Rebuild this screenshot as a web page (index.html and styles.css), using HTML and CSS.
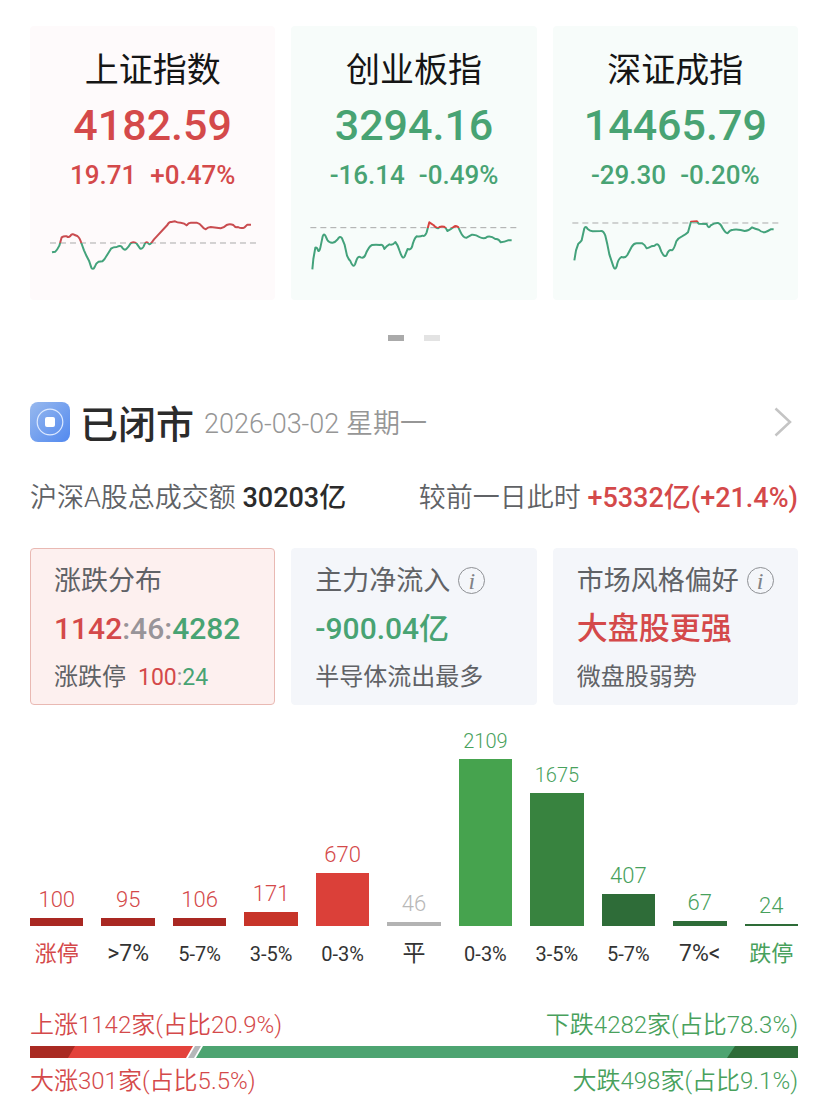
FILE: index.html
```html
<!DOCTYPE html>
<html lang="zh-CN">
<head>
<meta charset="utf-8">
<meta name="viewport" content="width=device-width, initial-scale=1">
<title>市场行情</title>
<link rel="stylesheet" href="styles.css">
</head>
<body>
<main class="page">
  <section class="grid indices" aria-label="指数">
    <article class="index index-up">
      <h2 class="index-name">上证指数</h2>
      <div class="index-value up">4182.59</div>
      <div class="index-change up"><span>19.71</span><span>+0.47%</span></div>
      <svg class="spark" viewBox="30 580 736 200" aria-hidden="true">
        <defs><linearGradient id="g1" gradientUnits="userSpaceOnUse" x1="0" y1="580" x2="0" y2="780"><stop offset=".45" stop-color="#c94c50"/><stop offset=".45" stop-color="#43a27b"/></linearGradient></defs>
        <path class="base" d="M90 670H708"/>
        <path class="line" stroke="url(#g1)" d="M96 698L106 696Q112 690 118 678L125 653Q132 648 140 650Q146 654 150 650Q157 640 164 646L172 649Q179 654 184 670L192 692L200 710L207 723L214 744Q219 752 224 742Q228 730 236 726L247 725Q254 720 260 708L273 687Q280 682 290 682Q300 676 305 681Q312 694 319 688Q326 682 332 671Q342 664 350 672L360 686Q366 690 371 680Q376 666 382 668Q388 678 394 670L402 659L442 616Q447 605 454 607L465 605Q472 609 482 609Q494 610 500 617Q506 608 514 609L530 609Q540 612 546 620Q552 628 557 629Q564 622 572 622L602 626Q612 624 620 616Q630 612 640 616Q646 625 654 622Q664 628 674 623L682 615L693 615"/>
      </svg>
    </article>
    <article class="index index-down">
      <h2 class="index-name">创业板指</h2>
      <div class="index-value down">3294.16</div>
      <div class="index-change down"><span>-16.14</span><span>-0.49%</span></div>
      <svg class="spark" viewBox="29 580 736 200" aria-hidden="true">
        <defs><linearGradient id="g2" gradientUnits="userSpaceOnUse" x1="0" y1="580" x2="0" y2="780"><stop offset=".22" stop-color="#d6423f"/><stop offset=".22" stop-color="#43a27b"/></linearGradient></defs>
        <path class="base" d="M87 624H706"/>
        <path class="line" stroke="url(#g2)" d="M93 749L96 718L102 684Q107 682 110 692Q114 698 117 684L124 650Q128 640 132 648L138 661Q144 670 154 669Q162 668 168 660Q176 646 182 656L190 676L197 708Q202 720 207 724Q215 746 221 734L226 720Q230 708 238 713Q247 717 252 706Q262 680 272 676Q284 674 296 676Q304 672 309 688Q316 678 324 674Q334 678 342 667Q350 676 355 694Q364 722 370 710L379 688Q388 692 392 682Q398 656 406 650Q416 652 424 648Q430 652 436 638L444 608Q450 612 456 616Q464 626 470 626Q476 618 488 621Q494 624 498 634Q508 630 516 623Q524 616 531 623L537 636Q546 656 556 654L572 645Q584 644 594 652Q608 660 618 651Q630 648 642 658Q652 656 658 668Q670 666 680 662L691 662"/>
      </svg>
    </article>
    <article class="index index-down">
      <h2 class="index-name">深证成指</h2>
      <div class="index-value down">14465.79</div>
      <div class="index-change down"><span>-29.30</span><span>-0.20%</span></div>
      <svg class="spark" viewBox="29 580 736 200" aria-hidden="true">
        <defs><linearGradient id="g3" gradientUnits="userSpaceOnUse" x1="0" y1="580" x2="0" y2="780"><stop offset=".14" stop-color="#d6423f"/><stop offset=".14" stop-color="#43a27b"/></linearGradient></defs>
        <path class="base" d="M87 610H706"/>
        <path class="line" stroke="url(#g3)" d="M93 722L98 692L105 672Q110 668 115 662L123 626Q127 617 133 628Q140 634 148 635L172 634Q180 632 186 648L192 674L198 704L210 740Q215 754 220 740Q224 718 234 712Q246 716 252 706L266 680Q272 671 280 671L297 671Q304 674 310 686Q316 684 324 680L334 678Q342 668 348 680L354 696Q364 716 370 706Q376 688 386 692Q392 690 399 665Q406 654 416 650Q428 644 434 638L443 606L461 605L466 612L490 613Q496 630 502 617Q514 609 524 610Q532 612 538 626Q546 640 553 641Q560 630 570 630Q580 628 592 631L604 634Q616 634 626 623Q636 628 646 630Q654 638 664 638Q674 634 682 629L691 629"/>
      </svg>
    </article>
  </section>

  <nav class="pager" aria-label="分页">
    <button class="dot dot-on" type="button" aria-label="第1页"></button>
    <button class="dot" type="button" aria-label="第2页"></button>
  </nav>

  <header class="status">
    <svg class="status-icon" viewBox="0 0 40 40" aria-hidden="true">
      <defs><linearGradient id="blue" x1="0" y1="0" x2="1" y2="1"><stop offset="0" stop-color="#98b9ee"/><stop offset="1" stop-color="#5289ef"/></linearGradient></defs>
      <rect width="40" height="40" rx="8" fill="url(#blue)"/>
      <circle cx="20" cy="20" r="12.8" fill="none" stroke="#dce9ff" stroke-width="1.2"/>
      <rect x="15" y="15" width="10" height="10" rx="2" fill="#fff"/>
    </svg>
    <h1 class="status-title">已闭市</h1>
    <time class="status-date" datetime="2026-03-02">2026-03-02 星期一</time>
    <button class="more" type="button" aria-label="更多">
      <svg class="chevron" viewBox="0 0 18 30" aria-hidden="true"><path d="M1.500 1.500L16 15L1.500 28.500"/></svg>
    </button>
  </header>

  <div class="turnover">
    <div>沪深A股总成交额 <strong class="total">30203亿</strong></div>
    <div>较前一日此时 <strong class="up">+5332亿(+21.4%)</strong></div>
  </div>

  <section class="grid tiles" aria-label="市场概况">
    <article class="tile tile-on">
      <h2 class="tile-title">涨跌分布</h2>
      <div class="tile-value"><span class="up">1142</span><span class="flat">:46:</span><span class="down">4282</span></div>
      <div class="tile-note">涨跌停<span class="limits"><span class="up">100</span><span class="flat">:</span><span class="down">24</span></span></div>
    </article>
    <article class="tile">
      <h2 class="tile-title">主力净流入
        <button class="info" type="button" aria-label="主力净流入说明">i</button></h2>
      <div class="tile-value down">-900.04亿</div>
      <div class="tile-note">半导体流出最多</div>
    </article>
    <article class="tile">
      <h2 class="tile-title">市场风格偏好
        <button class="info" type="button" aria-label="市场风格偏好说明">i</button></h2>
      <div class="tile-value tile-words up">大盘股更强</div>
      <div class="tile-note">微盘股弱势</div>
    </article>
  </section>

  <section class="chart" aria-label="涨跌分布图">
    <div class="col up"><span class="count">100</span><span class="bar red-3" style="height:8px"></span><span class="axis axis-cjk">涨停</span></div>
    <div class="col up"><span class="count">95</span><span class="bar red-3" style="height:8px"></span><span class="axis axis-end">&gt;7%</span></div>
    <div class="col up"><span class="count">106</span><span class="bar red-3" style="height:8px"></span><span class="axis axis-range">5-7%</span></div>
    <div class="col up"><span class="count">171</span><span class="bar red-2" style="height:14px"></span><span class="axis axis-range">3-5%</span></div>
    <div class="col up"><span class="count">670</span><span class="bar red-1" style="height:53px"></span><span class="axis axis-range">0-3%</span></div>
    <div class="col even"><span class="count">46</span><span class="bar gray" style="height:4px"></span><span class="axis axis-end">平</span></div>
    <div class="col fall"><span class="count count-long">2109</span><span class="bar green-1" style="height:167px"></span><span class="axis axis-range">0-3%</span></div>
    <div class="col fall"><span class="count count-long">1675</span><span class="bar green-2" style="height:133px"></span><span class="axis axis-range">3-5%</span></div>
    <div class="col fall"><span class="count">407</span><span class="bar green-3" style="height:32px"></span><span class="axis axis-range">5-7%</span></div>
    <div class="col fall"><span class="count">67</span><span class="bar green-3" style="height:5px"></span><span class="axis axis-end">7%&lt;</span></div>
    <div class="col fall"><span class="count">24</span><span class="bar green-3" style="height:2px"></span><span class="axis axis-cjk">跌停</span></div>
  </section>

  <section class="ratio" aria-label="涨跌占比">
    <div class="ratio-row"><span class="up">上涨1142家(占比20.9%)</span><span class="fall">下跌4282家(占比78.3%)</span></div>
    <svg class="ratio-bar" viewBox="0 0 768 12" preserveAspectRatio="none" aria-hidden="true">
      <path fill="#e3423b" d="M38 0H163L156 12H38z"/>
      <path fill="#a92a22" d="M0 0H45L38 12H0z"/>
      <path fill="#b5b7b9" d="M165 0H171L164 12H158z"/>
      <path fill="#4da471" d="M173 0H710V12H166z"/>
      <path fill="#2e6c38" d="M705 0H768V12H697z"/>
    </svg>
    <div class="ratio-row"><span class="up">大涨301家(占比5.5%)</span><span class="fall">大跌498家(占比9.1%)</span></div>
  </section>
</main>
</body>
</html>
```
FILE: styles.css
```css
* { box-sizing: border-box; }

body {
  margin: 0;
  background: #fff;
  color: #606266;
  font-family: Roboto, "Noto Sans CJK SC", sans-serif;
  font-weight: 400;
}

h1, h2 { margin: 0; font-weight: 400; }

button {
  padding: 0;
  border: 0;
  background: none;
  font: inherit;
  color: inherit;
  cursor: pointer;
}

.page { padding: 26px 30px 9px; }

.up { color: #d4494a; }
.down { color: #48a373; }
.fall { color: #48a15c; }
.even { color: #b8b8b8; }
.flat { color: #989499; }

.grid {
  display: grid;
  grid-template-columns: repeat(3, minmax(0, 1fr));
  gap: 16px;
}

/* Index cards */
.index {
  padding: 20px 0;
  border-radius: 4px;
  text-align: center;
}
.index-up { background: #fefafb; }
.index-down { background: #f7fcfa; }
.index-name {
  color: #151515;
  font-size: 34px;
  line-height: 48px;
}
.index-value {
  margin-top: 3px;
  font-size: 43px;
  font-weight: 500;
  line-height: 56px;
}
.index-change {
  display: flex;
  justify-content: center;
  gap: 14px;
  margin-top: 4px;
  font-size: 26px;
  font-weight: 500;
  line-height: 36px;
}
.spark {
  display: block;
  width: 100%;
  margin-top: 20px;
}
.spark path { fill: none; }
.base { stroke: #a9a9a9; stroke-width: 3; stroke-dasharray: 18 12; }
.line { stroke-width: 6; stroke-linejoin: round; }

/* Pager */
.pager {
  display: flex;
  justify-content: center;
  gap: 20px;
  margin-top: 35px;
}
.dot { width: 16px; height: 6px; background: #e3e3e3; }
.dot-on { background: #aaa; }

/* Market status */
.status {
  display: flex;
  align-items: center;
  height: 56px;
  margin-top: 53px;
}
.status-icon { width: 40px; height: 40px; }
.status-title {
  margin-left: 10px;
  color: #2b2b2b;
  font-size: 38px;
  font-weight: 500;
}
.status-date {
  margin-left: 10px;
  color: #969696;
  font-size: 27px;
  font-weight: 350;
}
.more {
  margin-left: auto;
  padding: 4px 6px;
}
.chevron { display: block; width: 18px; height: 30px; }
.chevron path { fill: none; stroke: #c4c4c4; stroke-width: 2.500; }

.turnover {
  display: flex;
  justify-content: space-between;
  margin-top: 28px;
  font-size: 27px;
  font-weight: 350;
  line-height: 40px;
  white-space: nowrap;
}
.turnover strong { font-weight: 500; }
.total { color: #2b2b2b; }

/* Summary tiles */
.tiles { margin-top: 30px; }
.tile {
  padding: 14px 0 9px 23px;
  border: 1px solid #f4f6fa;
  border-radius: 4px;
  background: #f4f6fa;
  white-space: nowrap;
}
.tile-on { border-color: #e9b9b3; background: #fdf0ef; }
.tile-title {
  display: flex;
  align-items: center;
  gap: 8px;
  font-size: 27px;
  line-height: 36px;
}
.info {
  width: 27px;
  height: 27px;
  border: 1px solid #8e9094;
  border-radius: 50%;
  color: #808287;
  font: italic 24px/24px "Liberation Serif", serif;
}
.tile-value {
  margin: 8px 0;
  font-size: 30px;
  font-weight: 500;
  line-height: 44px;
}
.tile-words { font-size: 31px; }
.tile-note { font-size: 24px; line-height: 36px; }
.limits { margin-left: 12px; font-size: 23px; line-height: 24px; }

/* Distribution chart */
.chart {
  display: grid;
  grid-template-columns: repeat(11, minmax(0, 1fr));
  gap: 18px;
  align-items: end;
  margin-top: 22px;
  text-align: center;
}
.col {
  display: flex;
  flex-direction: column;
  align-items: center;
  white-space: nowrap;
}
.count { font-size: 22px; font-weight: 350; line-height: 28px; }
.count-long { font-size: 20px; }
.bar { width: 100%; margin: 4px 0 12px; }
.red-1 { background: #db4039; }
.red-2 { background: #c73429; }
.red-3 { background: #a92822; }
.gray { background: #b3b3b3; }
.green-1 { background: #46a34e; }
.green-2 { background: #38833f; }
.green-3 { background: #2e6c38; }
.axis { color: #333; line-height: 32px; }
.axis-cjk { color: inherit; font-size: 22px; }
.axis-end { font-size: 23px; }
.axis-range { font-size: 20px; }

/* Rise and fall ratio */
.ratio { margin-top: 38px; }
.ratio-row {
  display: flex;
  justify-content: space-between;
  font-size: 24px;
  font-weight: 350;
  line-height: 34px;
}
.ratio-bar {
  display: block;
  width: 100%;
  height: 12px;
  margin: 4px 0 6px;
}
```
